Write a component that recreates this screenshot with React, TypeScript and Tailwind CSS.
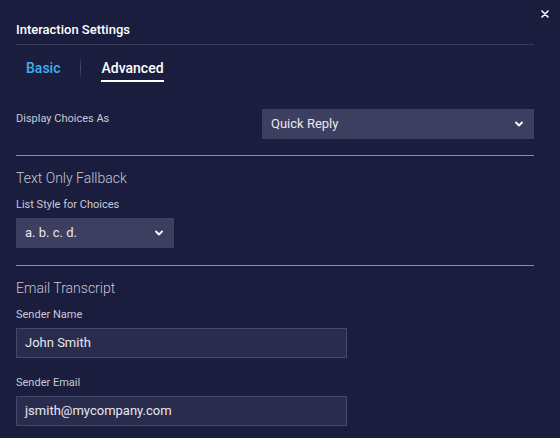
import React from "react";

const Chevron = () => (
    <svg width="8" height="6" viewBox="0 0 8 6" fill="none" className="shrink-0">
        <path d="M1 1.5l3 3 3-3" stroke="#ffffff" strokeWidth="1.8" strokeLinecap="round" strokeLinejoin="round" />
    </svg>
);

const Select = ({ value, className }: { value: string; className: string }) => (
    <div className={`h-[30px] bg-[#3d3f60] flex items-center justify-between pl-[9px] pr-[11px] text-[13px] text-[#e8e8f0] ${className}`}>
        <span>{value}</span>
        <Chevron />
    </div>
);

const Label = ({ children, className = "" }: { children: React.ReactNode; className?: string }) => (
    <div className={`text-[11px] leading-[16px] text-[#c9cad6] ${className}`}>{children}</div>
);

const SectionTitle = ({ children }: { children: React.ReactNode }) => (
    <div className="mt-[14px] text-[14px] leading-[16px] font-light text-[#c6c7d3]">{children}</div>
);

const TextInput = ({ value }: { value: string }) => (
    <div className="mt-[5px] h-[30px] w-[331px] bg-[#2a2c4d] border border-[#46486a] flex items-center pl-[8px] text-[13px] text-[#e8e8f0]">
        {value}
    </div>
);

export default function App() {
    return (
        <div className="relative w-[560px] h-[438px] overflow-hidden bg-[#1b1d3e] pl-4 pr-[26px] font-['Roboto',sans-serif]">
            {/* close */}
            <button className="absolute top-[10px] right-[11px]">
                <svg width="8" height="8" viewBox="0 0 8 8">
                    <path d="M1 1l6 6M7 1l-6 6" stroke="#ffffff" strokeWidth="1.6" strokeLinecap="round" />
                </svg>
            </button>

            {/* header */}
            <div className="pt-[22px] pb-[6px] border-b border-[#3a3c5e] text-[13px] leading-[16px] font-medium text-white">
                Interaction Settings
            </div>

            {/* tabs */}
            <div className="mt-[15px] flex items-start text-[14px] leading-[16px] font-medium">
                <div className="pl-[10px] text-[#3bb2e8]">Basic</div>
                <div className="ml-[20px] -mt-[3px] w-px h-[23px] bg-gradient-to-b from-transparent via-[#4a4c6e] to-transparent" />
                <div className="ml-[20px] pb-[4px] border-b-2 border-white text-white">Advanced</div>
            </div>

            {/* display choices */}
            <div className="mt-[27px] flex justify-between">
                <Label className="pt-[2px]">Display Choices As</Label>
                <Select value="Quick Reply" className="w-[272px]" />
            </div>

            <div className="mt-[16px] h-px bg-[#8b8da2]" />

            <SectionTitle>Text Only Fallback</SectionTitle>
            <Label className="mt-[11px]">List Style for Choices</Label>
            <Select value="a. b. c. d." className="mt-[5px] w-[158px]" />

            <div className="mt-[17px] h-px bg-[#8b8da2]" />

            <SectionTitle>Email Transcript</SectionTitle>
            <Label className="mt-[11px]">Sender Name</Label>
            <TextInput value="John Smith" />
            <Label className="mt-[17px]">Sender Email</Label>
            <TextInput value="jsmith@mycompany.com" />
        </div>
    );
}
